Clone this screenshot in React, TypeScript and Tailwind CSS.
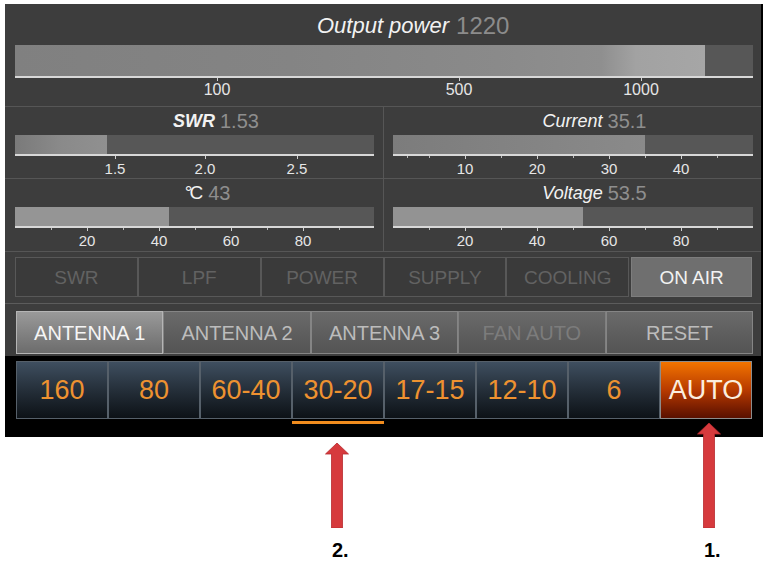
import React from "react";

type Label = { pos: number; text: string };

function Scale({ width, labels, minor, labelClass }: { width: number; labels: Label[]; minor: number[]; labelClass: string }) {
  return (
    <div className="relative" style={{ width }}>
      {minor.map((m, i) => (
        <div key={"m" + i} className="absolute top-0 w-px h-[2px] bg-[#bdbdbd]" style={{ left: m }} />
      ))}
      {labels.map((l, i) => (
        <div key={i}>
          <div className="absolute top-0 w-px h-[3px] bg-[#d0d0d0]" style={{ left: l.pos }} />
          <div className={"absolute -translate-x-1/2 leading-none text-[#e6e6e6] " + labelClass} style={{ left: l.pos }}>
            {l.text}
          </div>
        </div>
      ))}
    </div>
  );
}

function HalfMeter({
  title,
  value,
  fill,
  width,
  ml,
  labels,
  minor,
  fillClass,
  titleClass,
  h,
}: {
  title: string;
  value: string;
  fill: number;
  width: number;
  ml: number;
  labels: Label[];
  minor: number[];
  fillClass: string;
  titleClass: string;
  h: string;
}) {
  return (
    <div className={"flex flex-col " + h}>
      <div className="h-[28px] grid grid-cols-[1fr_auto_1fr] items-center pb-[1px]">
        <div />
        <span className={"leading-none text-[#f2f2f2] " + titleClass}>{title}</span>
        <span className="pl-[5px] text-[20px] text-[#8e8e8e] leading-none">{value}</span>
      </div>
      <div style={{ marginLeft: ml, width }}>
        <div className="flex h-[19px] bg-[#575757]">
          <div className={"h-full " + fillClass} style={{ width: fill }} />
        </div>
        <div className="h-[2px] bg-[#d8d8d8]" />
        <div className="h-[16px]">
          <Scale width={width} labels={labels} minor={minor} labelClass="top-[5px] text-[15px]" />
        </div>
      </div>
    </div>
  );
}

function StatusBtn({ text, on }: { text: string; on?: boolean }) {
  return (
    <div
      className={
        "h-[40px] flex items-center justify-center text-[19px] leading-none border " +
        (on ? "bg-[#6f6f6f] border-[#7d7d7d] text-[#f2f2f2]" : "bg-[#3a3a3a] border-[#585858] text-[#626262]")
      }
    >
      {text}
    </div>
  );
}

function AntBtn({ text, kind }: { text: string; kind: "sel" | "norm" | "dim" }) {
  const cls =
    kind === "sel"
      ? "bg-gradient-to-b from-[#9a9a9a] to-[#6c6c6c] border-[#b5b5b5] text-[#f5f5f5]"
      : kind === "dim"
      ? "bg-gradient-to-b from-[#6a6a6a] to-[#545454] border-[#808080] text-[#7c7c7c]"
      : "bg-gradient-to-b from-[#6a6a6a] to-[#545454] border-[#858585] text-[#bcbcbc]";
  return <div className={"h-[43px] flex items-center justify-center text-[20px] leading-none border " + cls}>{text}</div>;
}

function BandBtn({ text, auto }: { text: string; auto?: boolean }) {
  return (
    <div
      className={
        "h-[58px] flex items-center justify-center text-[27px] leading-none border " +
        (auto
          ? "bg-gradient-to-b from-[#f27400] via-[#b83a00] to-[#5a1000] border-[#8c8c8c] text-[#fbeede]"
          : "bg-gradient-to-b from-[#3f4f60] to-[#0d1217] border-[#56606a] text-[#ee9230]")
      }
    >
      {text}
    </div>
  );
}

function Arrow({ left, top, height }: { left: number; top: number; height: number }) {
  return (
    <svg className="absolute" style={{ left, top }} width={24} height={height} viewBox={`0 0 24 ${height}`}>
      <path d={`M12 0 L23.5 11 L17.5 11 L17.5 ${height} L6.5 ${height} L6.5 11 L0.5 11 Z`} fill="#d63a3d" stroke="#b82a2e" strokeWidth="0.8" />
    </svg>
  );
}

export default function App() {
  const halfMinor = [36, 108, 180, 252, 324];
  return (
    <div className="relative w-[767px] h-[574px] bg-white font-['Liberation_Sans',Arial,sans-serif] overflow-hidden">
      <div className="pt-[4px] pl-[5px]">
        <div className="w-[758px] bg-black">
          <div className="w-[756px] bg-[#3d3d3d] flex flex-col">
            {/* Output power */}
            <div className="h-[41px] grid grid-cols-[1fr_auto_1fr] items-center pt-[2px]">
              <div />
              <span className="text-[22px] italic text-[#f2f2f2] leading-none">Output power</span>
              <span className="pl-[7px] text-[24px] text-[#8c8c8c] leading-none">1220</span>
            </div>
            <div className="ml-[10px] w-[738px]">
              <div className="flex h-[31px] bg-[#575757]">
                <div className="h-full w-[690px] bg-[linear-gradient(90deg,#808080_0%,#848484_40%,#8a8a8a_70%,#8f8f8f_85%,#a2a2a2_90%,#a6a6a6_100%)]" />
              </div>
              <div className="h-[2px] bg-[#d8d8d8]" />
              <div className="h-[28px]">
                <Scale
                  width={738}
                  labels={[
                    { pos: 202, text: "100" },
                    { pos: 444, text: "500" },
                    { pos: 626, text: "1000" },
                  ]}
                  minor={[]}
                  labelClass="top-[4px] text-[16px]"
                />
              </div>
            </div>
            <div className="h-px bg-[#565656]" />

            {/* Meters */}
            <div className="flex">
              <div className="w-[378px] flex flex-col">
                <HalfMeter
                  title="SWR"
                  titleClass="text-[18px] italic font-bold"
                  value="1.53"
                  fill={92}
                  width={359}
                  ml={10}
                  h="h-[71px]"
                  fillClass="bg-gradient-to-r from-[#7a7a7a] via-[#8a8a8a] to-[#909090]"
                  labels={[
                    { pos: 100, text: "1.5" },
                    { pos: 190, text: "2.0" },
                    { pos: 282, text: "2.5" },
                  ]}
                  minor={[]}
                />
                <div className="h-px bg-[#565656]" />
                <HalfMeter
                  title="°C"
                  titleClass="text-[19px] tracking-[-3px] pr-[3px]"
                  value="43"
                  fill={154}
                  width={359}
                  ml={10}
                  h="h-[72px]"
                  fillClass="bg-[#959595]"
                  labels={[
                    { pos: 72, text: "20" },
                    { pos: 144, text: "40" },
                    { pos: 216, text: "60" },
                    { pos: 288, text: "80" },
                  ]}
                  minor={halfMinor}
                />
              </div>
              <div className="w-px bg-[#565656]" />
              <div className="w-[377px] flex flex-col">
                <HalfMeter
                  title="Current"
                  titleClass="text-[18px] italic"
                  value="35.1"
                  fill={252}
                  width={360}
                  ml={9}
                  h="h-[71px]"
                  fillClass="bg-gradient-to-r from-[#7c7c7c] to-[#8a8a8a]"
                  labels={[
                    { pos: 72, text: "10" },
                    { pos: 144, text: "20" },
                    { pos: 216, text: "30" },
                    { pos: 288, text: "40" },
                  ]}
                  minor={[14, ...halfMinor]}
                />
                <div className="h-px bg-[#565656]" />
                <HalfMeter
                  title="Voltage"
                  titleClass="text-[18px] italic"
                  value="53.5"
                  fill={190}
                  width={360}
                  ml={9}
                  h="h-[72px]"
                  fillClass="bg-[#939393]"
                  labels={[
                    { pos: 72, text: "20" },
                    { pos: 144, text: "40" },
                    { pos: 216, text: "60" },
                    { pos: 288, text: "80" },
                  ]}
                  minor={halfMinor}
                />
              </div>
            </div>
            <div className="h-px bg-[#565656]" />

            {/* Status */}
            <div className="h-[51px] pt-[5px] pl-[10px]">
              <div className="w-[737px] grid grid-cols-6">
                <StatusBtn text="SWR" />
                <StatusBtn text="LPF" />
                <StatusBtn text="POWER" />
                <StatusBtn text="SUPPLY" />
                <StatusBtn text="COOLING" />
                <div className="pl-[2px]">
                  <StatusBtn text="ON AIR" on />
                </div>
              </div>
            </div>
            <div className="h-px bg-[#5c5c5c]" />

            {/* Antenna */}
            <div className="h-[52px] pt-[7px] pl-[11px]">
              <div className="w-[737px] grid grid-cols-5">
                <AntBtn text="ANTENNA 1" kind="sel" />
                <AntBtn text="ANTENNA 2" kind="norm" />
                <AntBtn text="ANTENNA 3" kind="norm" />
                <AntBtn text="FAN AUTO" kind="dim" />
                <AntBtn text="RESET" kind="norm" />
              </div>
            </div>
          </div>

          {/* Bands */}
          <div className="h-[81px] pt-[5px] pl-[11px]">
            <div className="w-[736px] grid grid-cols-8">
              <BandBtn text="160" />
              <BandBtn text="80" />
              <BandBtn text="60-40" />
              <div className="flex flex-col">
                <BandBtn text="30-20" />
                <div className="mt-[2px] h-[3px] bg-[#f08c1e]" />
              </div>
              <BandBtn text="17-15" />
              <BandBtn text="12-10" />
              <BandBtn text="6" />
              <BandBtn text="AUTO" auto />
            </div>
          </div>
        </div>
      </div>

      <Arrow left={325} top={443} height={85} />
      <Arrow left={697} top={423} height={105} />
      <div className="absolute left-[332px] top-[540px] text-[20px] font-bold text-black leading-none">2.</div>
      <div className="absolute left-[704px] top-[540px] text-[20px] font-bold text-black leading-none">1.</div>
    </div>
  );
}
